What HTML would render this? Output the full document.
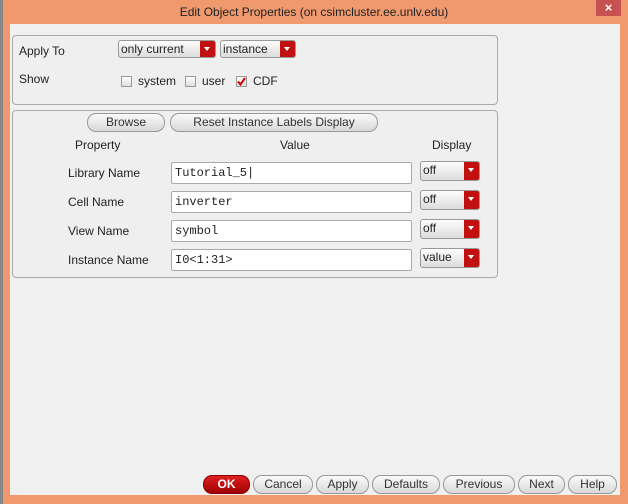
<!DOCTYPE html><html><head><style>
body{margin:0;width:628px;height:504px;position:relative;overflow:hidden;background:#f0996e;font-family:"Liberation Sans",sans-serif;font-size:12px;color:#222}
.a{position:absolute}
#left{left:0;top:0;width:3px;height:504px;background:#888}
#content{left:10px;top:24px;width:610px;height:471px;background:#f0f0f0}
.title{left:0;width:628px;top:5px;text-align:center;font-size:12px;color:#222}
.close{left:596px;top:0;width:25px;height:16px;background:#c75050;color:#fff;text-align:center;font-size:13px;line-height:15px;font-weight:bold}
.grp{border:1px solid #aaa;border-radius:4px;background:#efefef}
.dd{height:18px;border:1px solid #999;border-radius:3px;background:linear-gradient(#fdfdfd,#dcdcdc);font-size:12px;line-height:16px;padding-left:2px;box-sizing:border-box}
.dd i{position:absolute;right:0;top:0;width:15px;height:16px;background:#c01010;border-radius:0 2px 2px 0}
.dd i:after{content:"";position:absolute;left:4px;top:6px;border:3.5px solid transparent;border-top:4px solid #fff}
.cb{width:11px;height:11px;border:1px solid #999;background:linear-gradient(#fff,#ddd);box-sizing:border-box}
.btn{height:19px;border:1px solid #999;border-radius:9px;background:linear-gradient(#fafafa,#d8d8d8);text-align:center;line-height:17px;box-sizing:border-box;font-size:12px;color:#333}
.tf{height:22px;left:171px;width:241px;border:1px solid #aaa;border-radius:2px;background:#fff;box-sizing:border-box;font-family:"Liberation Mono",monospace;font-size:12px;line-height:20px;padding-left:3px}
</style></head><body>
<div class="a" id="left"></div>
<div class="a title">Edit Object Properties (on csimcluster.ee.unlv.edu)</div>
<div class="a close">×</div>
<div class="a" id="content"></div>
<div class="a grp" style="left:12px;top:35px;width:484px;height:68px"></div>
<div class="a" style="left:19px;top:44px">Apply To</div>
<div class="a" style="left:19px;top:72px">Show</div>
<div class="a dd" style="left:118px;top:40px;width:98px">only current<i></i></div>
<div class="a dd" style="left:220px;top:40px;width:76px">instance<i></i></div>
<div class="a cb" style="left:121px;top:76px"></div><div class="a" style="left:138px;top:74px">system</div>
<div class="a cb" style="left:185px;top:76px"></div><div class="a" style="left:202px;top:74px">user</div>
<div class="a cb" style="left:236px;top:76px"></div>
<svg class="a" style="left:236px;top:76px" width="11" height="11"><path d="M2 5.5 L4.5 8.5 L9 2" stroke="#c00" stroke-width="2" fill="none"/></svg>
<div class="a" style="left:253px;top:74px">CDF</div>
<div class="a grp" style="left:12px;top:110px;width:484px;height:166px"></div>
<div class="a btn" style="left:87px;top:113px;width:78px">Browse</div>
<div class="a btn" style="left:170px;top:113px;width:208px">Reset Instance Labels Display</div>
<div class="a" style="left:75px;top:138px">Property</div>
<div class="a" style="left:280px;top:138px">Value</div>
<div class="a" style="left:432px;top:138px">Display</div>
<div class="a" style="left:68px;top:166px">Library Name</div><div class="a tf" style="top:162px">Tutorial_5|</div><div class="a dd" style="left:420px;top:161px;width:60px;height:20px">off<i style="height:18px"></i></div>
<div class="a" style="left:68px;top:195px">Cell Name</div><div class="a tf" style="top:191px">inverter</div><div class="a dd" style="left:420px;top:190px;width:60px;height:20px">off<i style="height:18px"></i></div>
<div class="a" style="left:68px;top:224px">View Name</div><div class="a tf" style="top:220px">symbol</div><div class="a dd" style="left:420px;top:219px;width:60px;height:20px">off<i style="height:18px"></i></div>
<div class="a" style="left:68px;top:253px">Instance Name</div><div class="a tf" style="top:249px">I0&lt;1:31&gt;</div><div class="a dd" style="left:420px;top:248px;width:60px;height:20px">value<i style="height:18px"></i></div>
<div class="a btn" style="left:203px;top:475px;width:47px;background:linear-gradient(#e02020,#a00000);border-color:#800;color:#fff;font-weight:bold">OK</div>
<div class="a btn" style="left:253px;top:475px;width:60px">Cancel</div>
<div class="a btn" style="left:316px;top:475px;width:53px">Apply</div>
<div class="a btn" style="left:372px;top:475px;width:68px">Defaults</div>
<div class="a btn" style="left:443px;top:475px;width:72px">Previous</div>
<div class="a btn" style="left:518px;top:475px;width:47px">Next</div>
<div class="a btn" style="left:568px;top:475px;width:49px">Help</div>
</body></html>
